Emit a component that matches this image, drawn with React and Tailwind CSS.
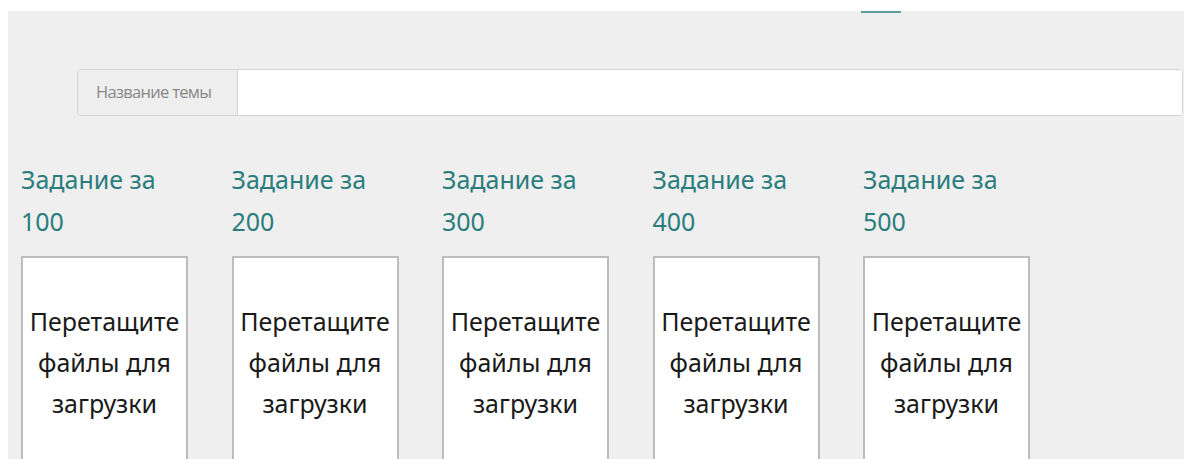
import React from "react";

const tasks = [100, 200, 300, 400, 500];

const TaskColumn = ({ points }) => (
  <div className="w-[167px] shrink-0">
    <h3 className="text-[25px] leading-[42px] text-[#2b7d7d] font-normal">
      Задание за
      <br />
      {points}
    </h3>
    {/* drop zone for the task files */}
    <div className="mt-[14px] h-[220px] border-2 border-[#bdbdbd] bg-white pt-[43px] text-center text-[25px] leading-[41px] text-[#1a1a1a]">
      Перетащите
      <br />
      файлы для
      <br />
      загрузки
    </div>
  </div>
);

const App = () => {
  return (
    <div
      className="h-[459px] overflow-hidden bg-white pl-[8px] pt-[11px]"
      style={{ fontFamily: '"Noto Sans", "Open Sans", sans-serif' }}
    >
      <div className="h-full bg-[#efefef]">
        <div className="ml-[853px] h-[2px] w-[40px] bg-[#5f9c9c]" />

        <div className="ml-[69px] mt-[56px] flex h-[47px] w-[1106px] overflow-hidden rounded border border-[#d3d3d3] bg-white">
          <span
            className="flex w-[160px] shrink-0 items-center border-r border-[#d3d3d3] bg-[#eeeeee] pl-[18px] text-[16.5px] tracking-[-0.7px] text-[#888888]"
            style={{ fontFamily: '"Open Sans", sans-serif' }}
          >
            Название темы
          </span>
          <input type="text" className="flex-1 bg-white outline-none" />
        </div>

        <div className="mt-[42px] flex gap-[43.5px] pl-[13px]">
          {tasks.map((p) => (
            <TaskColumn key={p} points={p} />
          ))}
        </div>
      </div>
    </div>
  );
};

export default App;
